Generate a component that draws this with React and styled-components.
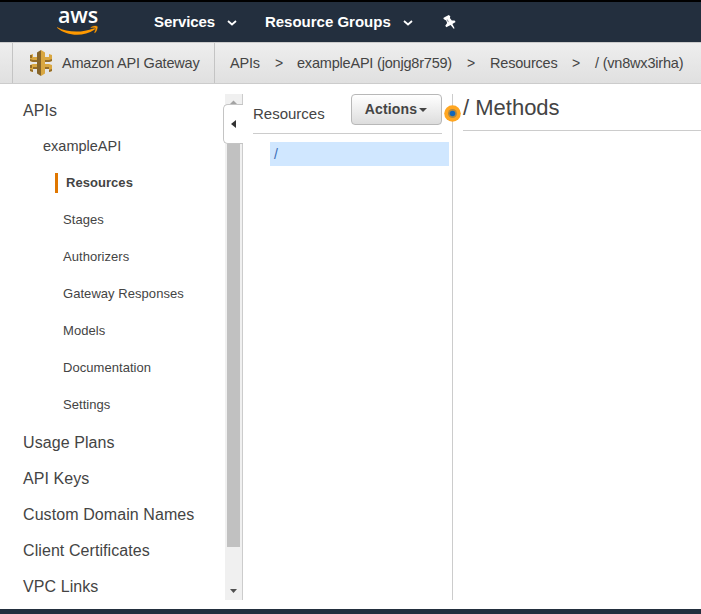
import React from "react";
import styled, { createGlobalStyle } from "styled-components";

const GlobalStyle = createGlobalStyle`
  *, *::before, *::after { box-sizing: border-box; }
  body {
    margin: 0;
    background: #fff;
    color: #444;
    font-family: "Liberation Sans", Arial, sans-serif;
    overflow: hidden;
  }
`;

const Page = styled.div`
  display: flex;
  flex-direction: column;
  width: 701px;
  height: 614px;
  overflow: hidden;
  white-space: nowrap;
`;

const TopNav = styled.header`
  display: flex;
  align-items: center;
  flex: none;
  height: 42px;
  padding-left: 57px;
  background: #232f3e;
  border-top: 2px solid #000;
`;

const Logo = styled.div`
  display: flex;
  flex-direction: column;
  align-items: center;
  width: 42px;
  height: 40px;
  margin-right: 55px;
  padding-top: 3px;
`;

const LogoText = styled.span`
  height: 20px;
  color: #fff;
  font: 600 21.5px/20px "Open Sans", sans-serif;
  letter-spacing: -0.2px;
`;

const Smile = styled.svg`
  display: block;
  flex: none;
  width: 42px;
  height: 10px;
`;

const NavItem = styled.div`
  display: flex;
  align-items: center;
  height: 38px;
  margin: 0 ${(p) => p.$gap}px 2px 0;
  color: #fff;
  font-size: 15px;
  font-weight: bold;
  letter-spacing: ${(p) => p.$spacing || 0}px;
`;

const Chevron = styled.svg`
  display: block;
  width: 10px;
  height: 6px;
  margin: 4px 0 0 12px;
`;

const Pin = styled.svg`
  display: block;
  width: 13px;
  height: 14px;
  margin-bottom: 1px;
`;

const CrumbBar = styled.nav`
  display: flex;
  flex: none;
  height: 42px;
  padding-left: 12px;
  background: linear-gradient(#eeeeee, #e0e0e0);
  border-top: 1px solid #ccc;
  border-bottom: 1px solid #ccc;
  font-size: 14.5px;
  letter-spacing: -0.2px;
  line-height: 40px;
`;

const Service = styled.div`
  display: flex;
  align-items: center;
  width: 203px;
  padding-left: 16px;
  border: solid #c4c4c4;
  border-width: 0 1px;
`;

const ServiceIcon = styled.svg`
  display: block;
  width: 24px;
  height: 26px;
  margin-right: 9px;
`;

const Crumbs = styled.div`
  display: flex;
  padding-left: 15px;
`;

const Crumb = styled.span`
  width: ${(p) => p.$width}px;
`;

const Separator = styled.span`
  width: ${(p) => p.$width}px;
  font-size: 14px;
`;

const Main = styled.main`
  display: flex;
  flex: none;
  height: 525px;
  padding-top: 10px;
`;

const Sidebar = styled.aside`
  display: flex;
  position: relative;
  width: 243px;
  height: 506px;
  border-right: 1px solid #ccc;
`;

const Menu = styled.div`
  width: 225px;
  margin-top: -2px;
`;

const MenuLink = styled.div`
  height: 36px;
  padding-left: ${(p) => (p.$nested ? 43 : 23)}px;
  font-size: ${(p) => (p.$nested ? 14.5 : 16)}px;
  letter-spacing: ${(p) => (p.$nested ? 0 : 0.08)}px;
  line-height: ${(p) => (p.$nested ? 36 : 38)}px;
`;

const SubMenu = styled.div`
  padding-bottom: 1px;
`;

const SubLink = styled.div`
  display: flex;
  align-items: center;
  height: 37px;
  padding-left: ${(p) => (p.$active ? 55 : 63)}px;
  font-size: 13px;
  font-weight: ${(p) => (p.$active ? "bold" : "normal")};
  letter-spacing: 0.05px;
`;

const ActiveMark = styled.span`
  width: 3px;
  height: 20px;
  margin-right: 8px;
  background: #e07700;
`;

const Scrollbar = styled.div`
  display: flex;
  flex-direction: column;
  align-items: center;
  width: 17px;
  height: 506px;
  background: #f0f0f0;
`;

const ScrollArrow = styled.svg`
  display: block;
  flex: none;
  width: 17px;
  height: 17px;
`;

const ScrollTrack = styled.div`
  flex: 1;
  width: 13px;
`;

const ScrollThumb = styled.div`
  height: 436px;
  background: #c1c1c1;
`;

const CollapseTab = styled.div`
  position: absolute;
  top: 10px;
  right: -1px;
  display: flex;
  align-items: center;
  width: 20px;
  height: 40px;
  padding-left: 7px;
  background: #fff;
  border: 1px solid #c4c4c4;
  border-right: 0;
  border-radius: 5px 0 0 5px;
`;

const CollapseArrow = styled.svg`
  display: block;
  width: 5px;
  height: 8px;
`;

const ResourcePanel = styled.section`
  position: relative;
  width: 210px;
  height: 506px;
  padding-left: 10px;
  border-right: 1px solid #ccc;
`;

const PanelHead = styled.div`
  display: flex;
  justify-content: space-between;
  width: 189px;
  height: 40px;
  border-bottom: 1px solid #ccc;
  font-size: 15px;
  line-height: 40px;
`;

const ActionsButton = styled.button`
  display: flex;
  align-items: center;
  justify-content: center;
  width: 91px;
  height: 31px;
  padding: 0 1px 2px 0;
  color: #444;
  background: linear-gradient(#ffffff, #dddddd);
  border: 1px solid #b8b8b8;
  border-radius: 4px;
  font: bold 14px "Liberation Sans", Arial, sans-serif;
  letter-spacing: 0.15px;
`;

const Caret = styled.svg`
  display: block;
  width: 8px;
  height: 4px;
  margin: 2px 0 0 2px;
`;

const ResourceRow = styled.div`
  width: 179px;
  height: 24px;
  margin: 8px 0 0 17px;
  padding-left: 4px;
  color: #3b6db5;
  background: #d0e7ff;
  font-size: 14px;
  line-height: 24px;
`;

const DragHandle = styled.svg`
  position: absolute;
  top: 11px;
  right: -9px;
  width: 17px;
  height: 17px;
`;

const Methods = styled.section`
  flex: 1;
  padding-left: 10px;
`;

const MethodsTitle = styled.h1`
  height: 37px;
  margin: 0;
  border-bottom: 1px solid #ccc;
  font-size: 22px;
  font-weight: normal;
  line-height: 27px;
`;

const Footer = styled.footer`
  height: 5px;
  background: #232f3e;
`;

const subLinks = [
  "Resources",
  "Stages",
  "Authorizers",
  "Gateway Responses",
  "Models",
  "Documentation",
  "Settings",
];

const links = [
  "Usage Plans",
  "API Keys",
  "Custom Domain Names",
  "Client Certificates",
  "VPC Links",
];

function Down() {
  return (
    <Chevron viewBox="0 0 10 6">
      <path d="M1 1l4 3.500L9 1" fill="none" stroke="#fff" strokeWidth="1.8" />
    </Chevron>
  );
}

export default function App() {
  return (
    <Page>
      <GlobalStyle />
      <TopNav>
        <Logo>
          <LogoText>aws</LogoText>
          <Smile viewBox="0 0 42 10">
            <path d="M.4 2.200C10 7.400 24 8.200 36.600 3.500c1.500-.6 2 .5.8 1.300C26 12.400 9.500 11 .3 3c-.5-.5-.3-1 .1-.8z" fill="#ff9900" />
            <path d="M33.800 2.500c2.700-2 6-1.700 6.500-1.100.4.800-.1 4-2 6.200-.5.500-1 .2-.7-.4.600-1.300 1.300-3.700.9-4.300-.5-.5-2.700-.3-4.200-.1-.6.100-.8-.1-.5-.3z" fill="#ff9900" stroke="#ff9900" strokeWidth=".3" />
          </Smile>
        </Logo>
        <NavItem $gap={28} $spacing={-0.1}>Services<Down /></NavItem>
        <NavItem $gap={30} $spacing={0}>Resource Groups<Down /></NavItem>
        <Pin viewBox="0 0 13 14">
          <path d="M1.500 2.200L5.800 0 7.300 1.300 6.900 2.900l1.900 2.600 2.800-.1 1 1.600-3.200 2.100 2.200 4.200-.9.500-3.100-3.900-4.300 2.300-1-1.500 1.800-2.600-.9-2.700L.9 4.300.3 2.900z" fill="#fff" />
          <path d="M4.200 4.500l1.200 2.600" fill="none" stroke="#6b7480" strokeWidth=".8" />
        </Pin>
      </TopNav>
      <CrumbBar>
        <Service>
          <ServiceIcon viewBox="0 0 24 26">
            <path d="M1 5l3-1v3h4V4h8v3h4V4l3 1v6l-3 1H4l-3-1zM1 15l3-1h16l3 1v6l-3 1v-3h-4v3H8v-3H4v3l-3-1z" fill="#d9a741" />
            <path d="M1 9l3 1h4v2H4l-3-1zM23 9l-3 1h-4v2h4l3-1zM1 19l3 1v2l-3-1zM23 19l-3 1v2l3-1zM4 17h4v2H4zM16 17h4v2h-4zM1 5h2v3H1zM1 15h2v3H1z" fill="#946c28" />
            <path d="M8 2.500L12 0v26l-4-2.500z" fill="#876529" />
            <path d="M12 0l4 2.500v21L12 26z" fill="#d9a741" />
          </ServiceIcon>
          Amazon API Gateway
        </Service>
        <Crumbs>
          <Crumb $width={45}>APIs</Crumb>
          <Separator $width={22}>&gt;</Separator>
          <Crumb $width={170}>exampleAPI (jonjg8r759)</Crumb>
          <Separator $width={23}>&gt;</Separator>
          <Crumb $width={82}>Resources</Crumb>
          <Separator $width={23}>&gt;</Separator>
          <Crumb>/ (vn8wx3irha)</Crumb>
        </Crumbs>
      </CrumbBar>
      <Main>
        <Sidebar>
          <Menu>
            <MenuLink>APIs</MenuLink>
            <MenuLink $nested>exampleAPI</MenuLink>
            <SubMenu>
              {subLinks.map((label, i) => (
                <SubLink key={label} $active={i === 0}>
                  {i === 0 && <ActiveMark />}
                  {label}
                </SubLink>
              ))}
            </SubMenu>
            {links.map((label) => (
              <MenuLink key={label}>{label}</MenuLink>
            ))}
          </Menu>
          <Scrollbar>
            <ScrollArrow viewBox="0 0 17 17">
              <path d="M5 10l3.500-3.500L12 10z" fill="#a3a3a3" />
            </ScrollArrow>
            <ScrollTrack>
              <ScrollThumb />
            </ScrollTrack>
            <ScrollArrow viewBox="0 0 17 17">
              <path d="M5 6h7l-3.500 4z" fill="#505050" />
            </ScrollArrow>
          </Scrollbar>
          <CollapseTab>
            <CollapseArrow viewBox="0 0 5 8">
              <path d="M5 0v8L0 4z" fill="#333" />
            </CollapseArrow>
          </CollapseTab>
        </Sidebar>
        <ResourcePanel>
          <PanelHead>
            Resources
            <ActionsButton>
              Actions
              <Caret viewBox="0 0 8 4">
                <path d="M0 0h8L4 4z" fill="#444" />
              </Caret>
            </ActionsButton>
          </PanelHead>
          <ResourceRow>/</ResourceRow>
          <DragHandle viewBox="0 0 17 17">
            <circle cx="8.500" cy="8.500" r="8.300" fill="#ffa621" />
            <circle cx="8.500" cy="8.500" r="4.500" fill="#b4883f" />
            <circle cx="8.500" cy="8.500" r="2.800" fill="#1166bb" />
          </DragHandle>
        </ResourcePanel>
        <Methods>
          <MethodsTitle>/ Methods</MethodsTitle>
        </Methods>
      </Main>
      <Footer />
    </Page>
  );
}
